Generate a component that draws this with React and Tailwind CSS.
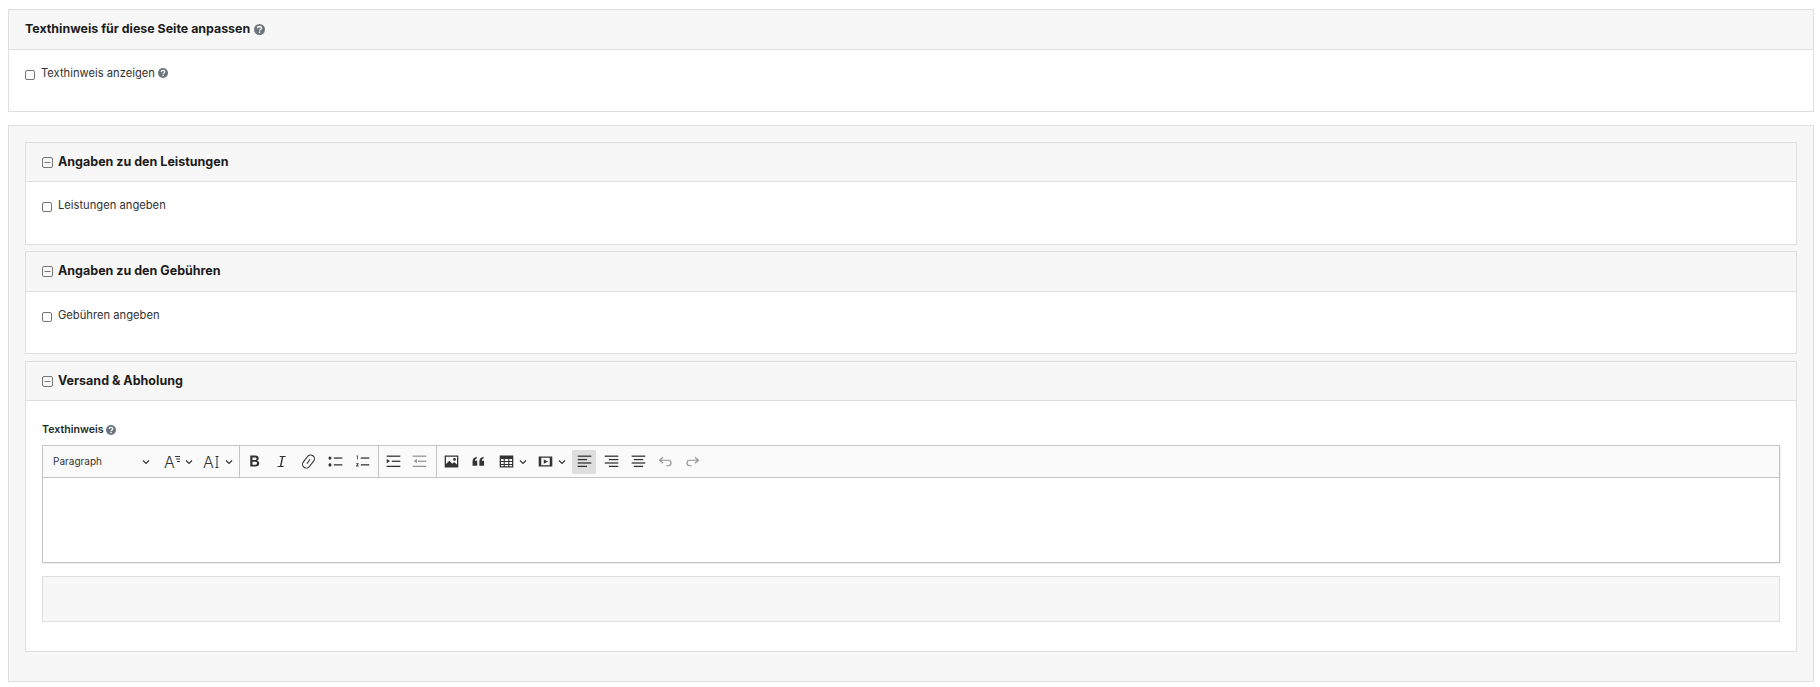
const font = "font-['Inter','Liberation_Sans',sans-serif]";

const Help = ({ size = 11 }) => (
  <svg width={size} height={size} viewBox="0 0 16 16" className="inline-block shrink-0">
    <circle cx="8" cy="8" r="8" fill="#6c757d" />
    <path d="M5.2 6.200c0-1.500 1.200-2.500 2.800-2.500s2.800 1 2.800 2.400c0 2-2.500 1.900-2.500 3.500" fill="none" stroke="#fff" strokeWidth="2" />
    <rect x="7.100" y="10.800" width="2.200" height="2.200" fill="#fff" />
  </svg>
);

const Minus = () => (
  <svg width="11" height="11" viewBox="0 0 11 11" className="shrink-0">
    <rect x="0.5" y="0.5" width="10" height="10" rx="1.500" fill="none" stroke="#777" />
    <path d="M2.500 5.500h6" stroke="#777" />
  </svg>
);

const Check = ({ label, help }) => (
  <label className="flex items-center gap-[6px] text-[11.2px] leading-[18px] text-[#333]">
    <span className="mt-[3px] h-[10px] w-[10px] shrink-0 rounded-[2px] border border-[#767676] bg-white" />
    <span className="flex items-center gap-[3px]">
      {label}
      {help && <Help size={10} />}
    </span>
  </label>
);

const Chevron = () => (
  <svg width="10" height="10" viewBox="0 0 10 10" className="shrink-0">
    <path d="M2 3.500 5 6.500 8 3.500" fill="none" stroke="#333" strokeWidth="1.100" />
  </svg>
);

const Ico = ({ children, dim, active }) => (
  <span className={`flex h-[24px] w-[24px] shrink-0 items-center justify-center rounded-[2px] ${active ? "bg-[#dedede]" : ""} ${dim ? "opacity-50" : ""}`}>
    <svg width="17" height="17" viewBox="0 0 20 20" fill="#333">{children}</svg>
  </span>
);

const Lines = ({ rows }) => rows.map(([x, y, w], i) => <rect key={i} x={x} y={y} width={w} height="1.500" />);

const Sep = ({ className = "" }) => <span className={`h-[31px] w-px shrink-0 bg-[#c4c4c4] ${className}`} />;

function Section({ title, children, className = "", headerHeight = "h-[39px]" }) {
  return (
    <section className={`border border-[#dfdfe2] bg-white ${className}`}>
      <header className={`flex ${headerHeight} items-center gap-[5px] border-b border-[#dfdfe2] bg-[#f7f7f7] px-4 text-[12.500px] font-bold text-[#1c1c1c]`}>
        <Minus />
        {title}
      </header>
      {children}
    </section>
  );
}

function Toolbar() {
  return (
    <div className="flex h-[32px] items-center border-b border-[#c4c4c4] bg-[#fafafa]">
      <span className="ml-[10px] flex w-[98px] shrink-0 items-center justify-between text-[10px] text-[#333]">
        Paragraph
        <Chevron />
      </span>
      <span className="ml-[13px] flex w-[14px] items-center text-[16px] font-light text-[#333]">
        A
        <svg width="5" height="7" viewBox="0 0 5 7" className="mb-[4px] shrink-0">
          <path d="M0 .5h5M1 3h4M2 5.500h3" stroke="#333" />
        </svg>
      </span>
      <span className="ml-[6px]"><Chevron /></span>
      <span className="ml-[9px] flex w-[14px] items-center text-[16px] font-light text-[#333]">
        A
        <svg width="4" height="12" viewBox="0 0 4 12" className="ml-[1px] shrink-0">
          <path d="M2 0v12M.5.500h3M.5 11.500h3" stroke="#333" />
        </svg>
      </span>
      <span className="ml-[7px]"><Chevron /></span>
      <Sep className="ml-[5px]" />
      <div className="ml-[2px] flex items-center gap-[3px]">
        <Ico><path d="M5 3h6c2.500 0 4 1.200 4 3.200 0 1.300-.7 2.300-1.900 2.800 1.600.4 2.500 1.600 2.500 3.100 0 2.400-1.700 3.900-4.500 3.900H5zm2.600 2.200v3h2.900c1.200 0 1.900-.6 1.900-1.500s-.7-1.500-1.900-1.500zm0 5.100v3.500h3.200c1.300 0 2.100-.7 2.100-1.800s-.8-1.700-2.100-1.700z" /></Ico>
        <Ico><path d="M8 3.500h7l-.2 1.200h-2.700L9.900 15.300h2.600l-.2 1.200h-7l.2-1.200h2.700l2.200-10.600H7.800z" /></Ico>
        <Ico>
          <g fill="none" stroke="#333" strokeWidth="1.300">
            <rect x="5.500" y="1.500" width="9" height="17" rx="4.500" transform="rotate(38 10 10)" />
            <path d="M8.200 12.600 11.800 7.400" />
          </g>
        </Ico>
        <Ico><circle cx="3.500" cy="6" r="1.800" /><circle cx="3.500" cy="14" r="1.800" /><Lines rows={[[8, 5.200, 10], [8, 13.200, 10]]} /></Ico>
        <Ico><Lines rows={[[8, 5.200, 10], [8, 13.200, 10]]} /><path d="M3 3h1.500v4.500H3.600V4H3zM2.500 12h3v1L4 15h1.600v1h-3.200v-1L4 13H2.500z" /></Ico>
      </div>
      <Sep className="ml-[4px]" />
      <div className="ml-[2px] flex items-center gap-[2px]">
        <Ico><Lines rows={[[2, 3, 16], [8, 9, 10], [2, 15, 16]]} /><path d="M2 7v5l4-2.500z" /></Ico>
        <Ico dim><Lines rows={[[2, 3, 16], [8, 9, 10], [2, 15, 16]]} /><path d="M7 7v5L3 9.500z" /></Ico>
      </div>
      <Sep className="ml-[5px]" />
      <div className="ml-[2px] flex items-center gap-[3px]">
        <Ico><path fillRule="evenodd" d="M2 3h16v14H2zm1.500 1.500v8.500l4-4 3.500 3.500 2-2 3.500 3V4.500z" /><circle cx="13.500" cy="7.500" r="1.700" /></Ico>
        <Ico><path d="M3 15V9.800C3 7 4.800 5.300 8 4.500v2C6.500 7 6 7.800 6 9h2.500v6zM11 15V9.800c0-2.800 1.800-4.500 5-5.300v2c-1.500.5-2 1.300-2 2.500h2.500v6z" /></Ico>
        <span className="ml-[1px] flex items-center">
          <Ico><path fillRule="evenodd" d="M2 3h16v14H2zm1.500 4v2.300h3.200V7zm4.500 0v2.300h4V7zm5.300 0v2.300h3.200V7zm-9.800 3.500v2.300h3.200v-2.300zm4.500 0v2.300h4v-2.300zm5.300 0v2.300h3.200v-2.300zm-9.800 3.500v1.600h3.200V14zm4.500 0v1.600h4V14zm5.300 0v1.600h3.200V14z" /></Ico>
          <Chevron />
        </span>
        <span className="ml-[2px] flex items-center">
          <Ico><path fillRule="evenodd" d="M2 4h16v12H2zm3 1.500v9h10v-9zM8 7.500l5 2.500-5 2.500z" /></Ico>
          <Chevron />
        </span>
        <span className="ml-[2px]">
          <Ico active><Lines rows={[[2, 3, 16], [2, 7, 11], [2, 11, 16], [2, 15, 11]]} /></Ico>
        </span>
        <Ico><Lines rows={[[2, 3, 16], [7, 7, 11], [2, 11, 16], [7, 15, 11]]} /></Ico>
        <Ico><Lines rows={[[2, 3, 16], [4.500, 7, 11], [2, 11, 16], [4.500, 15, 11]]} /></Ico>
        <Ico dim><path d="M7 5 3 8.500 7 12M3 8.500h10c2 0 3.500 1.300 3.500 3.300S15 15 13 15h-2" fill="none" stroke="#333" strokeWidth="1.400" /></Ico>
        <Ico dim><path d="M13 5l4 3.500L13 12M17 8.500H7c-2 0-3.500 1.300-3.500 3.300S5 15 7 15h2" fill="none" stroke="#333" strokeWidth="1.400" /></Ico>
      </div>
    </div>
  );
}

export default function App() {
  return (
    <div className={`${font} min-h-[687px] bg-white pl-2 pr-[6px] pt-[9px]`}>
      <section className="h-[103px] border border-[#dfdfe2] bg-white">
        <header className="flex h-[40px] items-center gap-[4px] border-b border-[#dfdfe2] bg-[#f7f7f7] px-4 text-[12.400px] font-bold text-[#1c1c1c]">
          Texthinweis für diese Seite anpassen
          <Help />
        </header>
        <div className="px-4 pt-[14px]">
          <Check label="Texthinweis anzeigen" help />
        </div>
      </section>

      <div className="mt-[13px] flex h-[557px] flex-col gap-[6px] border border-[#dfdfe2] bg-[#f7f7f7] px-4 pt-4">
        <Section title="Angaben zu den Leistungen" className="h-[103px]">
          <div className="px-4 pt-[14px]"><Check label="Leistungen angeben" /></div>
        </Section>
        <Section title="Angaben zu den Gebühren" className="h-[103px]" headerHeight="h-[40px]">
          <div className="px-4 pt-[14px]"><Check label="Gebühren angeben" /></div>
        </Section>
        <Section title="Versand & Abholung" className="mt-[1px] h-[291px]">
          <div className="px-4 pt-[20px]">
            <div className="flex h-[18px] items-center gap-[2px] text-[10.600px] font-semibold text-[#1c2b2b]">
              Texthinweis <Help size={10} />
            </div>
            <div className="mt-[6px] border border-[#c4c4c4] shadow-[1px_1px_0_rgba(0,0,0,0.06)]">
              <Toolbar />
              <div className="h-[84px] bg-white" />
            </div>
            <div className="mt-[13px] h-[46px] border border-[#dfdfe2] bg-[#f7f7f7]" />
          </div>
        </Section>
      </div>
    </div>
  );
}
